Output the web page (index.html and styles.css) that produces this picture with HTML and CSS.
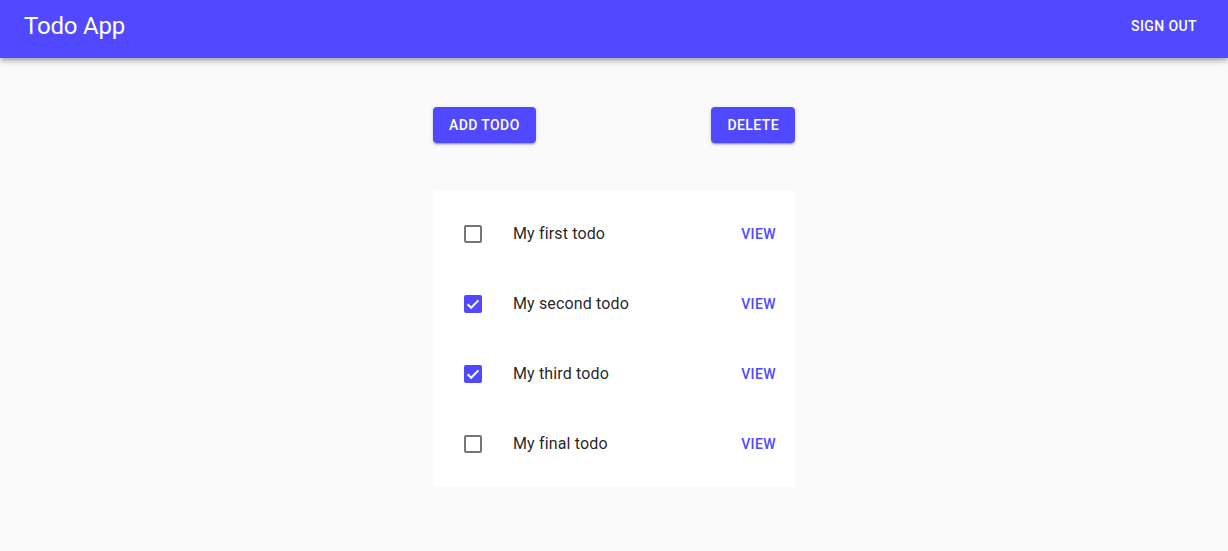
FILE: index.html
```html
<!DOCTYPE html>
<html lang="en">
<head>
<meta charset="utf-8">
<title>Todo App</title>
<link rel="stylesheet" href="styles.css">
</head>
<body>
<header class="appbar">
  <h1 class="title">Todo App</h1>
  <button class="text-btn light">Sign out</button>
</header>
<main class="main">
  <div class="actions">
    <button class="contained-btn">Add todo</button>
    <button class="contained-btn wide">Delete</button>
  </div>
  <ul class="todo-list">
    <li class="todo">
      <span class="box"></span>
      <span class="label">My first todo</span>
      <button class="text-btn primary">View</button>
    </li>
    <li class="todo">
      <span class="box checked"><svg viewBox="0 0 18 18" width="18" height="18"><path d="M3.6 9.2 7.2 12.8 14.4 5.4" fill="none" stroke="#fff" stroke-width="2"/></svg></span>
      <span class="label">My second todo</span>
      <button class="text-btn primary">View</button>
    </li>
    <li class="todo">
      <span class="box checked"><svg viewBox="0 0 18 18" width="18" height="18"><path d="M3.6 9.2 7.2 12.8 14.4 5.4" fill="none" stroke="#fff" stroke-width="2"/></svg></span>
      <span class="label">My third todo</span>
      <button class="text-btn primary">View</button>
    </li>
    <li class="todo">
      <span class="box"></span>
      <span class="label">My final todo</span>
      <button class="text-btn primary">View</button>
    </li>
  </ul>
</main>
</body>
</html>
```

FILE: styles.css
```css
* { box-sizing: border-box; }
body {
  margin: 0;
  background: #fafafa;
  font-family: Roboto, "Liberation Sans", sans-serif;
  color: rgba(0,0,0,0.87);
}
button {
  font-family: inherit;
  border: 0;
  background: none;
  cursor: pointer;
}
.appbar {
  height: 58px;
  background: #5049ff;
  color: #fff;
  display: flex;
  align-items: center;
  justify-content: space-between;
  padding: 0 23px 0 24px;
  box-shadow: 0 2px 4px -1px rgba(0,0,0,0.2), 0 4px 5px 0 rgba(0,0,0,0.14), 0 1px 10px 0 rgba(0,0,0,0.12);
}
.title {
  margin: 0;
  font-size: 24px;
  font-weight: 400;
  letter-spacing: -0.2px;
  line-height: 1;
  margin-top: -6px;
}
.text-btn {
  padding: 6px 8px;
  font-size: 14px;
  font-weight: 500;
  letter-spacing: 0.4px;
  text-transform: uppercase;
  line-height: 24px;
  border-radius: 4px;
}
.text-btn.light { color: #fff; margin-top: -6px; }
.text-btn.primary { color: #5049ff; }
.main {
  width: 362px;
  margin: 49px auto 0;
}
.actions {
  display: flex;
  justify-content: space-between;
}
.contained-btn {
  height: 36px;
  padding: 6px 16px;
  background: #5049ff;
  color: #fff;
  font-size: 14px;
  font-weight: 500;
  letter-spacing: 0.4px;
  text-transform: uppercase;
  line-height: 24px;
  border-radius: 4px;
  box-shadow: 0 3px 1px -2px rgba(0,0,0,0.2), 0 2px 2px 0 rgba(0,0,0,0.14), 0 1px 5px 0 rgba(0,0,0,0.12);
}
.contained-btn.wide { padding: 6px 16px 6px 17px; }
.todo-list {
  list-style: none;
  margin: 48px 0 0;
  padding: 8px 0;
  background: #fff;
}
.todo {
  height: 70px;
  display: flex;
  align-items: center;
  padding: 0 11px 0 31px;
}
.box {
  width: 18px;
  height: 18px;
  border: 2px solid rgba(0,0,0,0.54);
  border-radius: 2px;
  flex: none;
  display: flex;
}
.box.checked {
  border: 0;
  background: #5049ff;
}
.label {
  flex: 1;
  margin-left: 31px;
  font-size: 16px;
  letter-spacing: 0.15px;
  line-height: 24px;
}
```
